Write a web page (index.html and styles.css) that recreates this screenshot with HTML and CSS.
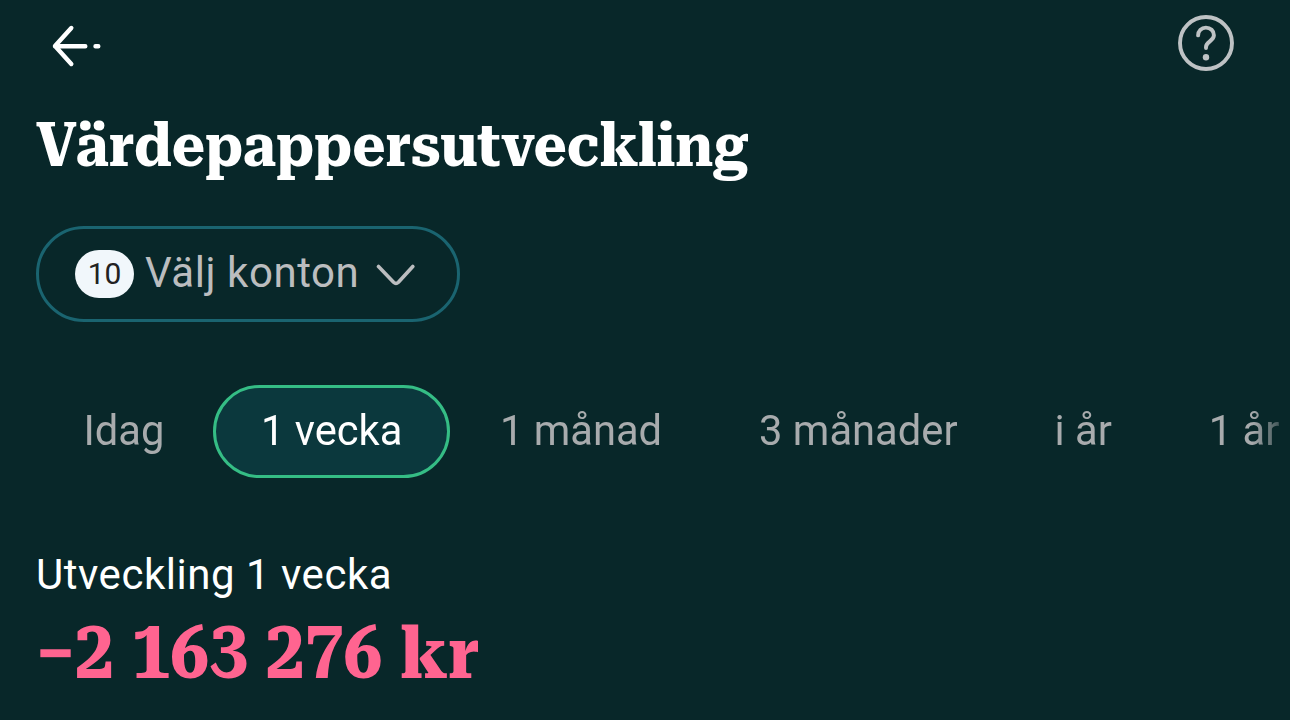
FILE: index.html
```
<!DOCTYPE html>
<html lang="sv">
<head>
    <meta charset="UTF-8" />
    <meta name="viewport" content="width=device-width, initial-scale=1.0" />
    <title>Värdepappersutveckling</title>
    <link rel="stylesheet" href="styles.css">
</head>
<body>
    <header class="topbar">
        <button class="icon-button" aria-label="Tillbaka">
            <svg class="back-icon" width="52" height="44" viewBox="0 0 52 44">
                <path d="M21.3 4 L5 22 L21.3 40 M5 22.3 H35.3 M45.5 22.3 H48.3" />
            </svg>
        </button>
        <button class="icon-button" aria-label="Hjälp">
            <svg class="help-icon" width="56" height="56" viewBox="0 0 56 56">
                <circle cx="28" cy="28" r="26" />
                <path d="M20.1 20.4 C20.1 15.8 23.4 12.6 27.9 12.6 C32.5 12.6 35.9 15.8 35.9 20.2 C35.9 26.2 28 26.5 28 32 V33" />
                <circle class="dot" cx="28" cy="42.3" r="3.2" />
            </svg>
        </button>
    </header>

    <main>
        <h1><span>Värdepappersutveckling</span></h1>

        <button class="account-select">
            <span class="count">10</span>
            <span class="select-label">Välj konton</span>
            <svg class="chevron" width="40" height="24" viewBox="0 0 40 24">
                <path d="M2.5 2.5 L17.6 18.3 Q20 20.6 22.4 18.3 L36.8 2.5" />
            </svg>
        </button>

        <nav class="periods">
            <button class="period">Idag</button>
            <button class="period active">1 vecka</button>
            <button class="period">1 månad</button>
            <button class="period">3 månader</button>
            <button class="period">i år</button>
            <button class="period">1 år</button>
        </nav>

        <section class="result">
            <div class="result-label">Utveckling 1 vecka</div>
            <div class="amount"><span>−2 163 276 kr</span></div>
        </section>
    </main>
</body>
</html>
```

FILE: styles.css
```
* {
    box-sizing: border-box;
}
body {
    font-family: Roboto, sans-serif;
    background-color: #082729;
    color: #fff;
    margin: 0;
    height: 720px;
    overflow: hidden;
}
button {
    padding: 0;
    background: none;
    border: none;
    color: inherit;
    font-family: inherit;
    cursor: pointer;
}
svg {
    display: block;
    fill: none;
    stroke-linecap: round;
    stroke-linejoin: round;
}
.topbar {
    display: flex;
    justify-content: space-between;
    align-items: center;
    height: 86px;
    padding: 0 56px 0 50px;
}
.back-icon {
    margin-top: 5px;
    stroke: #fff;
    stroke-width: 4.4;
}
.help-icon {
    stroke: #bec2c4;
    stroke-width: 3.9;
}
.help-icon .dot {
    fill: #bec2c4;
    stroke: none;
}
main {
    padding-left: 36px;
}
h1 {
    margin: 19px 0 0;
    height: 80px;
    font-family: "Roboto Slab", "Roboto Serif", "DejaVu Serif", serif;
    font-size: 61px;
    font-weight: 700;
    line-height: 80px;
    white-space: nowrap;
}
h1 span, .amount span {
    display: inline-block;
    transform-origin: left center;
}
h1 span {
    transform: scaleX(0.928);
}
.account-select {
    display: flex;
    align-items: center;
    width: 424px;
    height: 96px;
    margin-top: 41px;
    padding-left: 36px;
    border: 3px solid #1a6470;
    border-radius: 48px;
    color: #bbbdbf;
}
.count {
    width: 59px;
    height: 48px;
    border-radius: 24px;
    background-color: #f1f7fb;
    color: #222;
    font-size: 30px;
    line-height: 47px;
}
.select-label {
    margin: -4px 0 0 11px;
    font-size: 42px;
    letter-spacing: 0.55px;
}
.chevron {
    margin: 3px 0 0 17px;
    stroke: #bbbdbf;
    stroke-width: 3.6;
}
.periods {
    display: flex;
    width: 1244px;
    height: 93px;
    margin-top: 63px;
    overflow: hidden;
    -webkit-mask-image: linear-gradient(to right, #000 1216px, transparent 1260px);
    mask-image: linear-gradient(to right, #000 1216px, transparent 1260px);
}
.period {
    flex-shrink: 0;
    padding: 0 45.5px 2px;
    border: 3px solid transparent;
    border-radius: 47px;
    color: #a8abad;
    font-size: 41.7px;
    white-space: nowrap;
}
.period:first-child {
    padding-left: 44.5px;
}
.period.active {
    margin-right: 1px;
    padding: 0 45px 2px;
    background-color: #0b383d;
    border-color: #35bd85;
    color: #fff;
}
.result {
    margin-top: 72px;
}
.result-label {
    height: 50px;
    font-size: 42px;
    line-height: 50px;
    letter-spacing: 0.52px;
}
.amount {
    height: 96px;
    margin-top: 6px;
    color: #ff6490;
    font-family: "Roboto Slab", "Roboto Serif", "DejaVu Serif", serif;
    font-size: 72px;
    font-weight: 700;
    font-variant-numeric: lining-nums;
    line-height: 96px;
    white-space: nowrap;
}
.amount span {
    transform: scaleX(0.965);
}
```
